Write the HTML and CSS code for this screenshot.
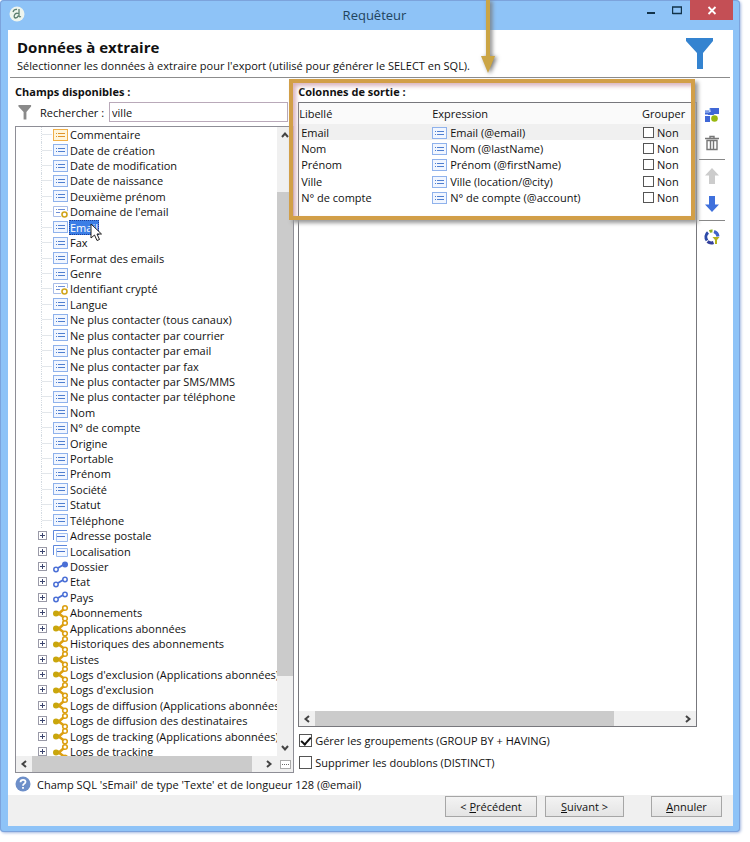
FILE: index.html
```
<!DOCTYPE html>
<html lang="fr">
<head>
  <meta charset="UTF-8">
  <title>Requêteur</title>
  <link rel="stylesheet" href="styles.css">
</head>
<body>
  <svg class="defs" aria-hidden="true">
    <symbol id="i-field" viewBox="0 0 15 12">
      <rect x=".5" y=".5" width="14" height="11" fill="#f1f6ff" stroke="#8fb2ec"/>
      <path d="M3 4.500h1M5 4.500h7M3 7.500h1M5 7.500h7" stroke="#4f7fd0"/>
    </symbol>
    <symbol id="i-memo" viewBox="0 0 15 12">
      <rect x=".5" y=".5" width="14" height="11" fill="#fff6dc" stroke="#f0b04a"/>
      <path d="M3 4.500h1M5 4.500h7M3 7.500h1M5 7.500h7" stroke="#e0952c"/>
    </symbol>
    <symbol id="i-calc" viewBox="0 0 15 12">
      <path d="M14.500 5V.5H.5v10H8" fill="none" stroke="#a9bde8"/>
      <path d="M3 3.500h1M5 3.500h7M3 6.500h4" stroke="#6f8fd6"/>
      <circle cx="11.500" cy="8.500" r="2.500" fill="#fff" stroke="#d0a51c" stroke-width="1.600"/>
    </symbol>
    <symbol id="i-group" viewBox="0 0 15 12">
      <path d="M.5 10V.5H14" fill="none" stroke="#5d86dc"/>
      <path d="M3.500 11.500v-8h11v8z" fill="#f4f8ff" stroke="#9dbcf0"/>
      <path d="M4 6.500h8" stroke="#4a74d0"/>
    </symbol>
    <symbol id="i-link" viewBox="0 0 15 12">
      <path d="M5 7l5-3" stroke="#4a6fd6" stroke-width="2"/>
      <circle cx="3" cy="8.500" r="2.200" fill="#fff" stroke="#4a6fd6" stroke-width="1.500"/>
      <circle cx="12" cy="3.500" r="2.200" fill="#fff" stroke="#4a6fd6" stroke-width="1.500"/>
    </symbol>
    <symbol id="i-link-full" viewBox="0 0 15 12">
      <path d="M5 7l5-3" stroke="#4a6fd6" stroke-width="2"/>
      <circle cx="3" cy="8.500" r="2.200" fill="#fff" stroke="#4a6fd6" stroke-width="1.500"/>
      <circle cx="12" cy="3.500" r="3" fill="#4a6fd6"/>
    </symbol>
    <symbol id="i-share" viewBox="0 0 15 20">
      <path d="M3 10.500l4-1 4-3.500M3 10.500l4 1 4 3" fill="none" stroke="#dca012" stroke-width="2.500"/>
      <circle cx="3" cy="10.500" r="3" fill="#c9a60c"/>
      <circle cx="12" cy="5" r="2.300" fill="#fff" stroke="#dca012" stroke-width="1.600"/>
      <circle cx="12" cy="15.500" r="2.300" fill="#fff" stroke="#dca012" stroke-width="1.600"/>
    </symbol>
    <symbol id="i-plus" viewBox="0 0 9 9">
      <rect x=".5" y=".5" width="8" height="8" fill="#fff" stroke="#9a9aa8"/>
      <path d="M2 4.500h5M4.500 2v5" stroke="#3c4670"/>
    </symbol>
    <symbol id="i-funnel" viewBox="0 0 28 32">
      <path d="M0 0h27v3L17 15v16h-6V15L0 3z"/>
    </symbol>
    <symbol id="i-chevron" viewBox="0 0 8 8">
      <path d="M1 6l3-3.500L7 6" fill="none" stroke="#444" stroke-width="2"/>
    </symbol>
  </svg>

  <div class="window">
    <header class="titlebar">
      <svg class="app-icon" viewBox="0 0 16 16"><circle cx="8" cy="8" r="7.500" fill="#eef5ee"/><path d="M10 3v6.500q0 2 2 1M9.500 7.500q-3-1-4 1.500t1 3q2 0 3-2.500M4 6q1-3 4-2.500" fill="none" stroke="#5d8070" stroke-width="1.300"/></svg>
      <h1 class="window-title">Requêteur</h1>
      <div class="window-buttons">
        <button class="win-btn" aria-label="Réduire"><svg width="10" height="10"><path d="M1 8h8" stroke="#12334a" stroke-width="2"/></svg></button>
        <button class="win-btn" aria-label="Agrandir"><svg width="10" height="10"><path d="M.5 9V2h9v6.500h-9M0 2h10" fill="none" stroke="#12334a" stroke-width="1.400"/></svg></button>
        <button class="win-btn close" aria-label="Fermer"><svg width="10" height="10"><path d="M1.500 2l7 7M8.500 2l-7 7" stroke="#fff" stroke-width="1.800"/></svg></button>
      </div>
    </header>

    <div class="client">
      <div class="intro">
        <div>
          <h2>Données à extraire</h2>
          <p>Sélectionner les données à extraire pour l'export (utilisé pour générer le SELECT en SQL).</p>
        </div>
        <svg class="intro-icon"><use href="#i-funnel"/></svg>
      </div>

      <main class="panels">
        <section class="fields">
          <h3>Champs disponibles :</h3>
          <div class="search">
            <svg class="search-icon"><use href="#i-funnel"/></svg>
            <label for="recherche">Rechercher :</label>
            <input type="text" id="recherche" value="ville">
          </div>
          <div class="tree">
            <div class="tree-view">
              <ul class="tree-list">
                <li class="leaf"><svg class="ico"><use href="#i-memo"/></svg><span>Commentaire</span></li>
                <li class="leaf"><svg class="ico"><use href="#i-field"/></svg><span>Date de création</span></li>
                <li class="leaf"><svg class="ico"><use href="#i-field"/></svg><span>Date de modification</span></li>
                <li class="leaf"><svg class="ico"><use href="#i-field"/></svg><span>Date de naissance</span></li>
                <li class="leaf"><svg class="ico"><use href="#i-field"/></svg><span>Deuxième prénom</span></li>
                <li class="leaf"><svg class="ico"><use href="#i-calc"/></svg><span>Domaine de l'email</span></li>
                <li class="leaf selected"><svg class="ico"><use href="#i-field"/></svg><span>Email</span>
                  <svg class="cursor" viewBox="0 0 12 19"><path d="M1 1v14l3.500-3 2.500 5.500 2.500-1L7 11h4.500z" fill="#fff" stroke="#222"/></svg>
                </li>
                <li class="leaf"><svg class="ico"><use href="#i-field"/></svg><span>Fax</span></li>
                <li class="leaf"><svg class="ico"><use href="#i-field"/></svg><span>Format des emails</span></li>
                <li class="leaf"><svg class="ico"><use href="#i-field"/></svg><span>Genre</span></li>
                <li class="leaf"><svg class="ico"><use href="#i-calc"/></svg><span>Identifiant crypté</span></li>
                <li class="leaf"><svg class="ico"><use href="#i-field"/></svg><span>Langue</span></li>
                <li class="leaf"><svg class="ico"><use href="#i-field"/></svg><span>Ne plus contacter (tous canaux)</span></li>
                <li class="leaf"><svg class="ico"><use href="#i-field"/></svg><span>Ne plus contacter par courrier</span></li>
                <li class="leaf"><svg class="ico"><use href="#i-field"/></svg><span>Ne plus contacter par email</span></li>
                <li class="leaf"><svg class="ico"><use href="#i-field"/></svg><span>Ne plus contacter par fax</span></li>
                <li class="leaf"><svg class="ico"><use href="#i-field"/></svg><span>Ne plus contacter par SMS/MMS</span></li>
                <li class="leaf"><svg class="ico"><use href="#i-field"/></svg><span>Ne plus contacter par téléphone</span></li>
                <li class="leaf"><svg class="ico"><use href="#i-field"/></svg><span>Nom</span></li>
                <li class="leaf"><svg class="ico"><use href="#i-field"/></svg><span>N° de compte</span></li>
                <li class="leaf"><svg class="ico"><use href="#i-field"/></svg><span>Origine</span></li>
                <li class="leaf"><svg class="ico"><use href="#i-field"/></svg><span>Portable</span></li>
                <li class="leaf"><svg class="ico"><use href="#i-field"/></svg><span>Prénom</span></li>
                <li class="leaf"><svg class="ico"><use href="#i-field"/></svg><span>Société</span></li>
                <li class="leaf"><svg class="ico"><use href="#i-field"/></svg><span>Statut</span></li>
                <li class="leaf"><svg class="ico"><use href="#i-field"/></svg><span>Téléphone</span></li>
                <li><button class="expand" aria-label="Développer"><svg><use href="#i-plus"/></svg></button><svg class="ico"><use href="#i-group"/></svg><span>Adresse postale</span></li>
                <li><button class="expand" aria-label="Développer"><svg><use href="#i-plus"/></svg></button><svg class="ico"><use href="#i-group"/></svg><span>Localisation</span></li>
                <li><button class="expand" aria-label="Développer"><svg><use href="#i-plus"/></svg></button><svg class="ico"><use href="#i-link-full"/></svg><span>Dossier</span></li>
                <li><button class="expand" aria-label="Développer"><svg><use href="#i-plus"/></svg></button><svg class="ico"><use href="#i-link"/></svg><span>Etat</span></li>
                <li><button class="expand" aria-label="Développer"><svg><use href="#i-plus"/></svg></button><svg class="ico"><use href="#i-link"/></svg><span>Pays</span></li>
                <li><button class="expand" aria-label="Développer"><svg><use href="#i-plus"/></svg></button><svg class="ico share"><use href="#i-share"/></svg><span>Abonnements</span></li>
                <li><button class="expand" aria-label="Développer"><svg><use href="#i-plus"/></svg></button><svg class="ico share"><use href="#i-share"/></svg><span>Applications abonnées</span></li>
                <li><button class="expand" aria-label="Développer"><svg><use href="#i-plus"/></svg></button><svg class="ico share"><use href="#i-share"/></svg><span>Historiques des abonnements</span></li>
                <li><button class="expand" aria-label="Développer"><svg><use href="#i-plus"/></svg></button><svg class="ico share"><use href="#i-share"/></svg><span>Listes</span></li>
                <li><button class="expand" aria-label="Développer"><svg><use href="#i-plus"/></svg></button><svg class="ico share"><use href="#i-share"/></svg><span>Logs d'exclusion (Applications abonnées)</span></li>
                <li><button class="expand" aria-label="Développer"><svg><use href="#i-plus"/></svg></button><svg class="ico share"><use href="#i-share"/></svg><span>Logs d'exclusion</span></li>
                <li><button class="expand" aria-label="Développer"><svg><use href="#i-plus"/></svg></button><svg class="ico share"><use href="#i-share"/></svg><span>Logs de diffusion (Applications abonnées)</span></li>
                <li><button class="expand" aria-label="Développer"><svg><use href="#i-plus"/></svg></button><svg class="ico share"><use href="#i-share"/></svg><span>Logs de diffusion des destinataires</span></li>
                <li><button class="expand" aria-label="Développer"><svg><use href="#i-plus"/></svg></button><svg class="ico share"><use href="#i-share"/></svg><span>Logs de tracking (Applications abonnées)</span></li>
                <li><button class="expand" aria-label="Développer"><svg><use href="#i-plus"/></svg></button><svg class="ico share"><use href="#i-share"/></svg><span>Logs de tracking</span></li>
              </ul>
            </div>
            <div class="scroll vertical">
              <svg class="chevron"><use href="#i-chevron"/></svg>
              <div class="track"><div class="thumb"></div></div>
              <svg class="chevron down"><use href="#i-chevron"/></svg>
            </div>
            <div class="scroll horizontal">
              <svg class="chevron left"><use href="#i-chevron"/></svg>
              <div class="track"><div class="thumb"></div></div>
              <svg class="chevron right"><use href="#i-chevron"/></svg>
            </div>
            <button class="corner" aria-label="Options"><svg width="11" height="9"><rect x=".5" y=".5" width="10" height="8" fill="#fff" stroke="#aaa"/><path d="M2 4.500h7" stroke="#666" stroke-dasharray="1 1"/></svg></button>
          </div>
        </section>

        <section class="output">
          <h3>Colonnes de sortie :</h3>
          <div class="grid-box">
            <table>
              <thead>
                <tr><th class="col-label">Libellé</th><th>Expression</th><th class="col-group">Grouper</th></tr>
              </thead>
              <tbody>
                <tr class="current"><td>Email</td><td><svg class="ico"><use href="#i-field"/></svg>Email (@email)</td><td><label><input type="checkbox">Non</label></td></tr>
                <tr><td>Nom</td><td><svg class="ico"><use href="#i-field"/></svg>Nom (@lastName)</td><td><label><input type="checkbox">Non</label></td></tr>
                <tr><td>Prénom</td><td><svg class="ico"><use href="#i-field"/></svg>Prénom (@firstName)</td><td><label><input type="checkbox">Non</label></td></tr>
                <tr><td>Ville</td><td><svg class="ico"><use href="#i-field"/></svg>Ville (location/@city)</td><td><label><input type="checkbox">Non</label></td></tr>
                <tr><td>N° de compte</td><td><svg class="ico"><use href="#i-field"/></svg>N° de compte (@account)</td><td><label><input type="checkbox">Non</label></td></tr>
              </tbody>
            </table>
            <div class="scroll horizontal">
              <svg class="chevron left"><use href="#i-chevron"/></svg>
              <div class="track"><div class="thumb wide"></div></div>
              <svg class="chevron right"><use href="#i-chevron"/></svg>
            </div>
          </div>
          <label class="option"><input type="checkbox" checked>Gérer les groupements (GROUP BY + HAVING)</label>
          <label class="option"><input type="checkbox">Supprimer les doublons (DISTINCT)</label>

          <div class="highlight"></div>
        </section>

        <aside class="toolbar">
          <button aria-label="Ajouter"><svg viewBox="0 0 16 16"><path d="M6 1h9v6h-4l-4 1zM1 3.500h4v4H1zM1 9h5v6H1zM4 5h6v3H4z" fill="#3f67d6"/><path d="M5.500 1v4H1" fill="none" stroke="#b9d4f8"/><circle cx="10.500" cy="11.500" r="3.300" fill="#98b80f"/></svg></button>
          <button aria-label="Supprimer"><svg viewBox="0 0 16 16"><path d="M1 3.500h14M6 3V1.500h4V3M3 5.500v9h10v-9zM6.500 6v8M9.500 6v8" fill="none" stroke="#777" stroke-width="1.400"/></svg></button>
          <hr>
          <button aria-label="Monter"><svg viewBox="0 0 16 16"><path d="M8 0l7 7.500h-4V16H5V7.500H1z" fill="#ccc"/></svg></button>
          <button aria-label="Descendre"><svg viewBox="0 0 16 16"><path d="M8 16l7-7.500h-4V0H5v8.500H1z" fill="#3f70dc"/></svg></button>
          <hr>
          <button aria-label="Filtre avancé"><svg viewBox="0 0 16 16"><g fill="none" stroke-width="3"><path d="M3 11.500A6 6 0 0 1 4 3.500" stroke="#2c4aa8"/><path d="M5.500 2.500A6 6 0 0 1 8.500 2" stroke="#8cae22"/><path d="M10 2.500A6 6 0 0 1 14 7.500" stroke="#3f62c8"/><path d="M3.500 12.500A6 6 0 0 0 9.500 13.500" stroke="#34409c"/></g><path d="M8.500 8h7l-2.500 3v4h-2v-4z" fill="#b3b21a"/></svg></button>
        </aside>
      </main>

      <div class="status">
        <svg class="help" viewBox="0 0 16 16"><circle cx="8" cy="8" r="7.500" fill="#6d8fc9"/><path d="M5.500 6.300q0-2.500 2.500-2.500t2.500 2q0 1.200-1.300 2Q8 8.500 8 9.800M8 11v1.800" fill="none" stroke="#fff" stroke-width="1.800"/></svg>
        <span>Champ SQL 'sEmail' de type 'Texte' et de longueur 128 (@email)</span>
      </div>

      <footer class="actions">
        <button class="prev">&lt; <u>P</u>récédent</button>
        <button class="next"><u>S</u>uivant &gt;</button>
        <button class="cancel"><u>A</u>nnuler</button>
      </footer>
    </div>

    <svg class="arrow" viewBox="0 0 16 74"><path d="M6 0h4v56h5L8 73 1 56h5z" fill="#cba545"/></svg>
  </div>
</body>
</html>
```
FILE: styles.css
```
* {
  box-sizing: border-box;
}

body {
  margin: 0;
  padding: 0 10px 10px 0;
  min-height: 100vh;
  display: flex;
  flex-direction: column;
  background: #fff;
  color: #111;
  font-family: "Open Sans", "Noto Sans", sans-serif;
  font-size: 11px;
  line-height: 15px;
}

h1, h2, h3, p, ul {
  margin: 0;
  padding: 0;
}

button, input {
  font: inherit;
  color: inherit;
}

.defs {
  position: absolute;
  width: 0;
  height: 0;
}

/* window frame */
.window {
  position: relative;
  flex: 1;
  display: flex;
  flex-direction: column;
  padding: 0 7px 6px 8px;
  background: #8ec3f7;
  border-radius: 4px;
  box-shadow: inset 0 0 0 1px #7ca3dc, 1px 1px 3px #a5b8e0;
}

.titlebar {
  display: grid;
  grid-template-columns: 1fr auto 1fr;
  height: 30px;
}

.app-icon {
  width: 16px;
  height: 16px;
  margin: 6px 0 0 1px;
}

.window-title {
  align-self: center;
  padding-left: 8px;
  font-size: 13px;
  font-weight: 400;
  color: #22445e;
}

.window-buttons {
  display: flex;
  justify-content: flex-end;
}

.win-btn {
  width: 26px;
  height: 20px;
  padding: 0;
  border: 0;
  background: none;
}

.win-btn.close {
  width: 43px;
  background: #c44f55;
}

.client {
  flex: 1;
  display: flex;
  flex-direction: column;
  background: #fff;
}

.intro {
  display: flex;
  justify-content: space-between;
  height: 48px;
  margin: 0 3px 0 2px;
  padding: 6px 16px 0 7px;
  border-bottom: 1px solid #8c8c8c;
}

.intro h2 {
  font-size: 15px;
  line-height: 22px;
}

.intro-icon {
  width: 28px;
  height: 32px;
  margin-top: 2px;
  fill: #3483d0;
}

h3 {
  height: 21px;
  font-size: 11px;
  line-height: 22px;
}

/* three columns: tree, output list, tool buttons */
.panels {
  flex: 1;
  display: grid;
  grid-template-columns: minmax(0, 7fr) minmax(0, 10fr) 24px;
  column-gap: 4px;
  padding: 3px 8px 0 7px;
}

.fields, .output {
  display: flex;
  flex-direction: column;
}

.search {
  display: flex;
  align-items: center;
  height: 20px;
  margin: 0 6px 4px 3px;
}

.search-icon {
  width: 14px;
  height: 15px;
  margin-right: 8px;
  fill: #8a8a8a;
}

.search input {
  flex: 1;
  min-width: 0;
  height: 20px;
  margin-left: 5px;
  padding: 0 2px;
  border: 1px solid #b9a9b9;
  background: #fff;
}

.tree {
  flex: 1;
  display: grid;
  grid-template-columns: minmax(0, 1fr) 16px;
  grid-template-rows: 1fr 16px;
  border: 1px solid #8e8e96;
}

.tree-view {
  display: flex;
  overflow: hidden;
}

.tree-list {
  flex: 1;
  display: flex;
  flex-direction: column;
  margin-bottom: -3px;
  padding-left: 21px;
  list-style: none;
}

.tree-list li {
  position: relative;
  flex: 1;
  display: flex;
  align-items: center;
  min-height: 15px;
  white-space: nowrap;
}

.tree-list .leaf::before {
  content: "";
  flex: none;
  align-self: stretch;
  width: 10px;
  margin: 0 1px 0 4px;
  border-left: 1px dotted #d4dbe2;
  background: linear-gradient(#e2e6ea, #e2e6ea) center / 100% 1px no-repeat;
}

.ico {
  flex: none;
  width: 15px;
  height: 12px;
  margin-right: 1px;
}

.ico.share {
  height: 20px;
  margin-top: -4px;
  margin-bottom: -4px;
}

.tree-list span {
  padding: 0 1px;
}

.selected span {
  background: #3b7ee6;
  color: #fff;
  outline: 1px dotted #1c3f9a;
  outline-offset: -1px;
}

.cursor {
  position: absolute;
  left: 53px;
  top: 3px;
  z-index: 1;
  width: 12px;
  height: 19px;
}

.expand {
  flex: none;
  width: 9px;
  height: 9px;
  margin: 0 6px 0 1px;
  padding: 0;
  border: 0;
  background: none;
}

.expand svg {
  display: block;
  width: 9px;
  height: 9px;
}

/* scroll bars */
.scroll {
  display: flex;
  align-items: center;
  background: #f0f0f0;
}

.scroll.vertical {
  flex-direction: column;
}

.chevron {
  flex: none;
  width: 8px;
  height: 8px;
  margin: 4px;
}

.chevron.down {
  transform: rotate(180deg);
}

.chevron.left {
  transform: rotate(-90deg);
}

.chevron.right {
  transform: rotate(90deg);
}

.track {
  flex: 1;
  align-self: stretch;
}

.thumb {
  background: #cbcbcb;
}

.vertical .track {
  display: flex;
  flex-direction: column;
}

.vertical .thumb {
  height: 81%;
  margin-top: 49px;
}

.horizontal .thumb {
  width: 96%;
  height: 100%;
}

.horizontal .thumb.wide {
  width: 82%;
}

.corner {
  display: flex;
  align-items: center;
  justify-content: center;
  padding: 0;
  border: 0;
  background: #f0f0f0;
}

/* output list */
.output {
  position: relative;
}

.grid-box {
  flex: 1;
  display: flex;
  flex-direction: column;
  justify-content: space-between;
  border: 1px solid #77777c;
  margin-bottom: 2px;
}

.grid-box .scroll {
  height: 15px;
}

table {
  width: 100%;
  height: 103px;
  border-collapse: collapse;
  table-layout: fixed;
}

th {
  height: 21px;
  padding: 0;
  font-weight: 400;
  text-align: left;
  background: #fafafa;
}

.col-label {
  width: 133px;
}

.col-group {
  width: 54px;
}

td {
  padding: 0;
  white-space: nowrap;
}

td:first-child {
  padding-left: 2px;
}

td .ico {
  margin-right: 3px;
  vertical-align: -2px;
}

.current {
  background: #f0f0f0;
}

td label {
  display: flex;
  align-items: center;
  gap: 3px;
}

input[type="checkbox"] {
  appearance: none;
  flex: none;
  width: 11px;
  height: 11px;
  margin: 0 0 0 1px;
  border: 1px solid #555;
  background: #fff;
}

.option {
  display: flex;
  align-items: center;
  gap: 3px;
  height: 22px;
}

.option input[type="checkbox"] {
  width: 13px;
  height: 13px;
}

.option input:checked {
  display: grid;
  place-items: center;
}

.option input:checked::before {
  content: "";
  width: 4px;
  height: 8px;
  margin-bottom: 2px;
  border: solid #111;
  border-width: 0 2px 2px 0;
  transform: rotate(42deg);
}

/* callout frame and arrow */
.highlight {
  position: absolute;
  left: -9px;
  top: -2px;
  right: 2px;
  height: 141px;
  border: 4px solid #d29f48;
  box-shadow: 3px 3px 4px #999, inset 3px 3px 4px #d9b4c0;
  pointer-events: none;
}

.arrow {
  position: absolute;
  left: 480px;
  top: 0;
  width: 16px;
  height: 74px;
  filter: drop-shadow(2px 1px 2px #777);
}

.toolbar {
  display: flex;
  flex-direction: column;
  align-items: center;
  margin-left: -2px;
  padding-top: 20px;
}

.toolbar button {
  width: 24px;
  height: 28px;
  padding: 6px 4px;
  border: 0;
  background: none;
}

.toolbar svg {
  display: block;
  width: 16px;
  height: 16px;
}

.toolbar hr {
  width: 100%;
  margin: 2px 0;
  border: 0;
  border-top: 1px solid #888;
}

.status {
  display: flex;
  align-items: center;
  gap: 6px;
  height: 22px;
  padding-left: 7px;
}

.help {
  width: 16px;
  height: 16px;
}

.actions {
  display: flex;
  justify-content: flex-end;
  height: 31px;
  padding: 1px 11px 9px;
  background: #f0f0f0;
}

.actions button {
  padding: 0;
  border: 1px solid #a6a6a6;
  background: linear-gradient(#f3f3f3, #e4e4e4);
}

.prev {
  width: 92px;
  margin-right: 8px;
}

.next {
  width: 79px;
  margin-right: 27px;
}

.cancel {
  width: 71px;
}
```
